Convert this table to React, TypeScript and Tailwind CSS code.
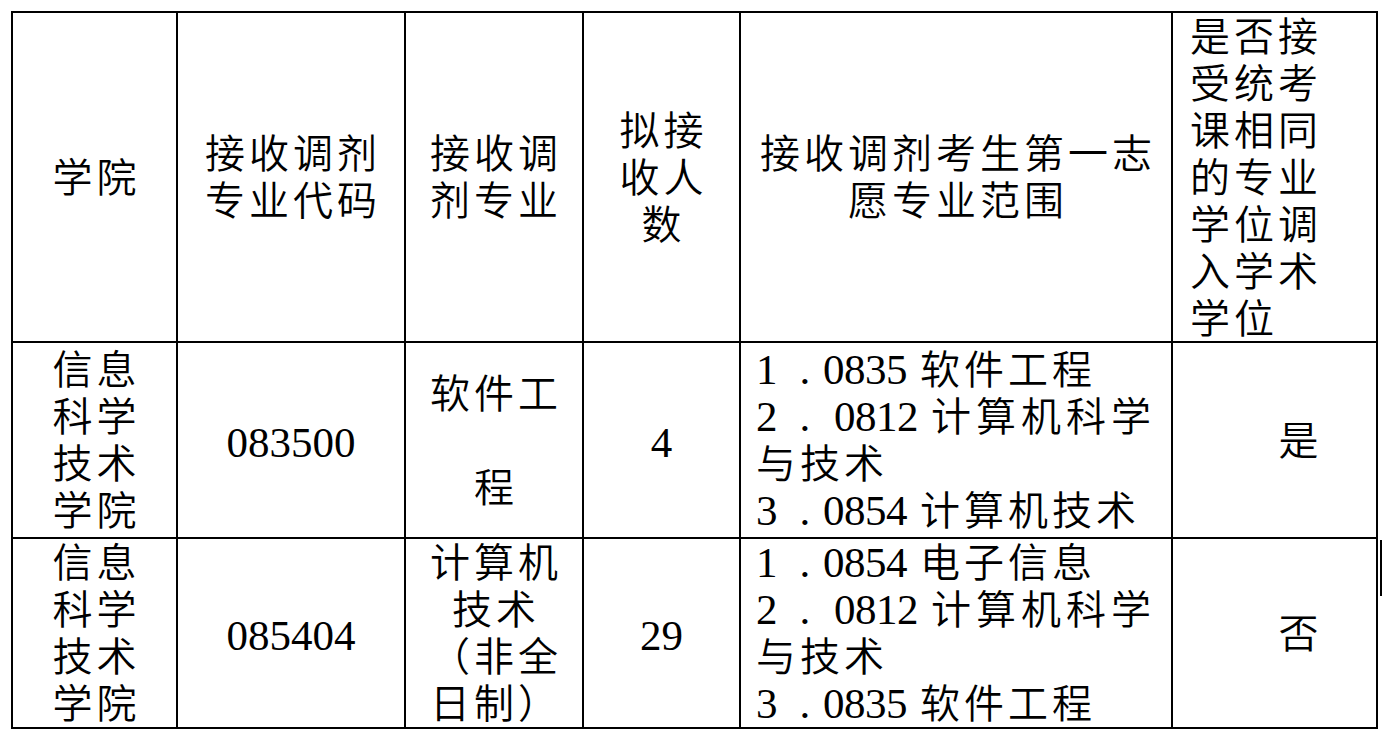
import React from "react";

type Row = {
  college: string[];
  code: string;
  major: string[];
  count: string;
  range: { no: string; code: string; name: string; wrap?: string; wide?: boolean }[];
  same: string;
};

const rows: Row[] = [
  {
    college: ["信息", "科学", "技术", "学院"],
    code: "083500",
    major: ["软件工", "", "程"],
    count: "4",
    range: [
      { no: "1", code: "0835", name: "软件工程" },
      { no: "2", code: "0812", name: "计算机科学", wrap: "与技术", wide: true },
      { no: "3", code: "0854", name: "计算机技术" },
    ],
    same: "是",
  },
  {
    college: ["信息", "科学", "技术", "学院"],
    code: "085404",
    major: ["计算机", "技术", "（非全", "日制）"],
    count: "29",
    range: [
      { no: "1", code: "0854", name: "电子信息" },
      { no: "2", code: "0812", name: "计算机科学", wrap: "与技术", wide: true },
      { no: "3", code: "0835", name: "软件工程" },
    ],
    same: "否",
  },
];

function Lines({ lines }: { lines: string[] }) {
  return (
    <>
      {lines.map((l, i) => (
        <div key={i} className="h-[47px] whitespace-nowrap">
          {l}
        </div>
      ))}
    </>
  );
}

export default function App() {
  const center =
    "flex flex-col items-center justify-center bg-white pb-[4px] pl-[4px] font-[350] text-[40px] leading-[47px] tracking-[4px]";
  const num =
    "flex items-center justify-center bg-white pt-[4px] font-[Liberation_Serif,serif] text-[43px] leading-[47px]";

  return (
    <div className="h-[740px] w-[1392px] bg-white font-['Noto_Sans_CJK_SC',sans-serif] text-black">
      <div className="flex items-start pl-[11px] pt-[11px]">
        <div className="grid w-fit grid-cols-[163px_226px_176px_155px_430px_203px] grid-rows-[328px_194px_188px] gap-[2px] bg-black p-[2px]">
          {/* header */}
          <div className={center}>
            <Lines lines={["学院"]} />
          </div>
          <div className={center}>
            <Lines lines={["接收调剂", "专业代码"]} />
          </div>
          <div className={center}>
            <Lines lines={["接收调", "剂专业"]} />
          </div>
          <div className={center}>
            <Lines lines={["拟接", "收人", "数"]} />
          </div>
          <div className={center}>
            <Lines lines={["接收调剂考生第一志", "愿专业范围"]} />
          </div>
          <div className="flex flex-col justify-center bg-white pb-[3px] pl-[17px] font-[350] text-[40px] leading-[47px] tracking-[4px]">
            <Lines lines={["是否接", "受统考", "课相同", "的专业", "学位调", "入学术", "学位"]} />
          </div>

          {rows.map((r) => (
            <React.Fragment key={r.code}>
              <div className={center}>
                <Lines lines={r.college} />
              </div>
              <div className={num}>{r.code}</div>
              <div className={center}>
                <Lines lines={r.major} />
              </div>
              <div className={num}>{r.count}</div>
              <div className="flex flex-col justify-center bg-white pb-[4px] pl-[15px] text-[40px] leading-[47px] tracking-[4px]">
                {r.range.map((it) => (
                  <React.Fragment key={it.no}>
                    <div className="h-[47px] whitespace-nowrap">
                      <span
                        className={
                          it.wide
                            ? "inline-block w-[78px] font-[Liberation_Serif,serif] text-[43px] tracking-normal"
                            : "inline-block w-[67px] font-[Liberation_Serif,serif] text-[43px] tracking-normal"
                        }
                      >
                        {it.no}
                        <span className="pl-[22px]">.</span>
                      </span>
                      <span className="font-[Liberation_Serif,serif] text-[43px] tracking-[-0.5px]">
                        {it.code}
                      </span>{" "}
                      <span className={it.wide ? "font-[350] tracking-[5px]" : "font-[350]"}>
                        {it.name}
                      </span>
                    </div>
                    {it.wrap && (
                      <div className="h-[47px] whitespace-nowrap font-[350]">{it.wrap}</div>
                    )}
                  </React.Fragment>
                ))}
              </div>
              <div className="flex items-center justify-center bg-white pb-[4px] pl-[48px] font-[350] text-[40px] leading-[47px]">
                {r.same}
              </div>
            </React.Fragment>
          ))}
        </div>
        <div className="ml-[2px] mt-[529px] h-[56px] w-[2px] bg-black" />
      </div>
    </div>
  );
}
